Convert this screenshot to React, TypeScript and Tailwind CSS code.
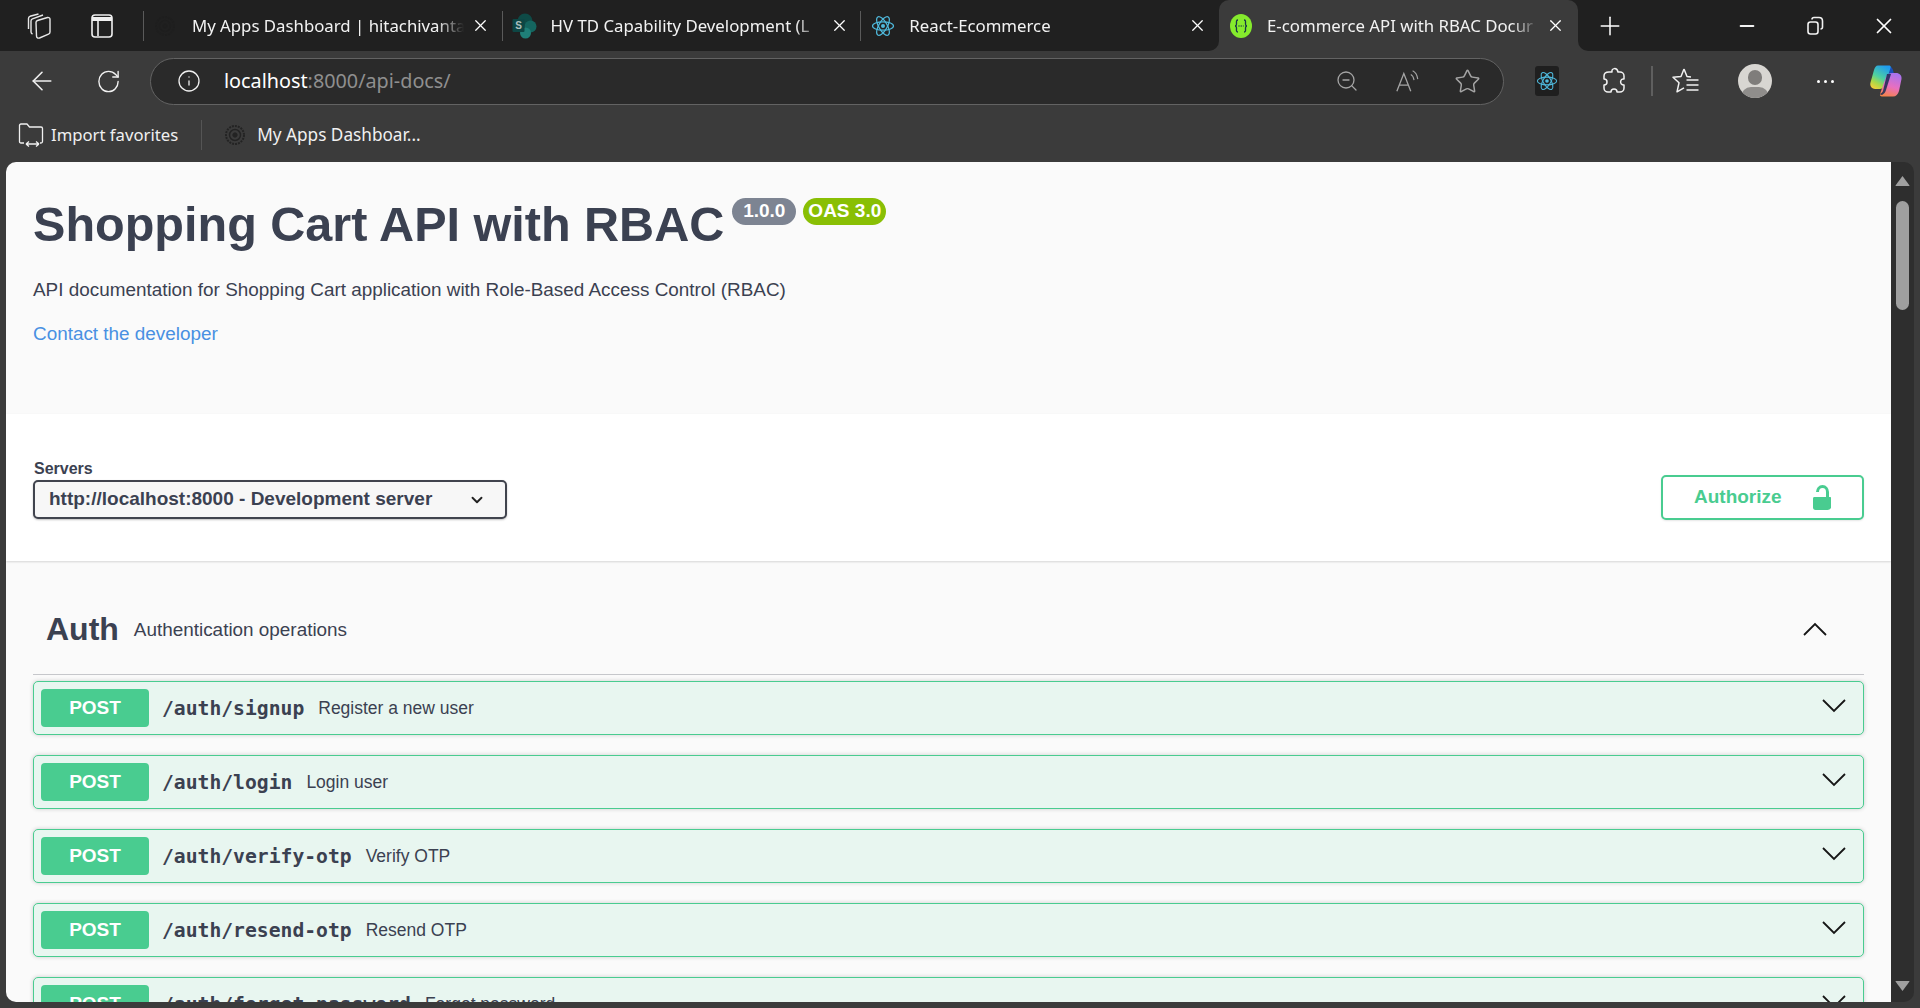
import { ArrowLeft, ChevronDown, Info, Minus, Plus, RotateCw, Star, X, ZoomOut } from "lucide-react";

const endpoints = [
  { path: "/auth/signup", summary: "Register a new user" },
  { path: "/auth/login", summary: "Login user" },
  { path: "/auth/verify-otp", summary: "Verify OTP" },
  { path: "/auth/resend-otp", summary: "Resend OTP" },
  { path: "/auth/forget-password", summary: "Forget password" },
];

function ReactIcon({ size = 24 }: { size?: number }) {
  return (
    <svg width={size} height={size} viewBox="0 0 24 24" fill="none" stroke="#4fb9dc" strokeWidth="1.2">
      <circle cx="12" cy="12" r="2" fill="#4fb9dc" stroke="none" />
      <ellipse cx="12" cy="12" rx="10.5" ry="4.2" />
      <ellipse cx="12" cy="12" rx="10.5" ry="4.2" transform="rotate(60 12 12)" />
      <ellipse cx="12" cy="12" rx="10.5" ry="4.2" transform="rotate(120 12 12)" />
    </svg>
  );
}

function DashIcon({ opacity = 1 }: { opacity?: number }) {
  return (
    <svg width="22" height="24" viewBox="0 0 22 24" fill="none" stroke="#1e1e1e" style={{ opacity }}>
      <circle cx="11" cy="12" r="9" strokeWidth="2" strokeDasharray="2 1" />
      <circle cx="11" cy="12" r="5.5" strokeWidth="1.5" />
      <circle cx="11" cy="12" r="2.2" fill="#1e1e1e" />
    </svg>
  );
}

function SharePointIcon() {
  return (
    <svg width="25" height="26" viewBox="0 0 25 26">
      <circle cx="13" cy="8" r="7.5" fill="#0e4a46" />
      <circle cx="18.500" cy="13.500" r="6" fill="#14655f" />
      <circle cx="13.500" cy="20" r="5.500" fill="#1f7f78" />
      <rect x="0.500" y="6" width="12" height="13" rx="1" fill="#0d4644" />
      <text x="6.500" y="16" textAnchor="middle" fontSize="10" fontWeight="700" fill="#aebfbd" fontFamily="Liberation Sans, sans-serif">S</text>
    </svg>
  );
}

function SwaggerIcon() {
  return (
    <svg width="22" height="24" viewBox="0 0 22 24">
      <ellipse cx="11" cy="12" rx="11" ry="12" fill="#85ea2d" />
      <path d="M8 6c-2 0-1.500 2-1.500 4s-1 2-1.500 2c.5 0 1.500 0 1.500 2s-.5 4 1.500 4M14 6c2 0 1.500 2 1.500 4s1 2 1.500 2c-.5 0-1.500 0-1.500 2s.5 4-1.500 4" fill="none" stroke="#173647" strokeWidth="1.3" />
      <path d="M8.500 12h5" stroke="#173647" strokeWidth="1.3" strokeDasharray="1 1.200" />
    </svg>
  );
}

function CopilotIcon() {
  return (
    <svg width="32" height="32" viewBox="0 0 32 32">
      <defs>
        <linearGradient id="cpA" x1="0.7" y1="0" x2="0.2" y2="1">
          <stop offset="0" stopColor="#1f9cf0" />
          <stop offset="0.5" stopColor="#4fd0a0" />
          <stop offset="0.75" stopColor="#a8d84a" />
          <stop offset="1" stopColor="#f5cf3a" />
        </linearGradient>
        <linearGradient id="cpB" x1="0.6" y1="0" x2="0.3" y2="1">
          <stop offset="0" stopColor="#a873ee" />
          <stop offset="0.55" stopColor="#e86fc0" />
          <stop offset="1" stopColor="#f7834a" />
        </linearGradient>
      </defs>
      <path d="M18 1c3 0 5 2 5.500 6L24 9h-6z" fill="#1b4fb8" />
      <path d="M8 .5h11c1.500 0 2 1 1.500 2.500L15 20c-1 2.500-3 4-5.500 4H5c-3.500 0-5.500-3-4.500-6.500L4 5C5 2 6 .5 8 .5z" fill="url(#cpA)" />
      <path d="M23 8h3c3.500 0 6 2.500 5.500 6L29 26c-1 3.500-3 5.500-6 5.500H12c-1.500 0-2.500-1-2-2.500l6-17c.8-2.500 3-4 7-4z" fill="url(#cpB)" />
      <path d="M17 9h4l-5 16c-.5 2-2 4-4 5l-3-1c2 0 3.500-1.500 4-3z" fill="#182a52" opacity="0.85" />
    </svg>
  );
}

function Chevron({ up }: { up?: boolean }) {
  return (
    <svg width="24" height="14" viewBox="0 0 24 14" fill="none" stroke="#161616" strokeWidth="1.8" className={up ? "rotate-180" : "mb-[4px]"}>
      <path d="M1 1l11 11L23 1" />
    </svg>
  );
}

function Tab({ title, icon, active }: { title: string; icon: React.ReactNode; active?: boolean }) {
  return (
    <div className={"flex h-full w-[359px] items-center " + (active ? "rounded-t-[10px] bg-[#3b3b3b]" : "")}>
      {!active && <div className="h-[30px] w-[1px] bg-[#5a5a5a]" />}
      <div className="flex w-[48px] shrink-0 justify-center pr-[5px]">{icon}</div>
      <span className="w-[272px] overflow-hidden whitespace-nowrap text-[16.800px] text-[#f2f2f2] [mask-image:linear-gradient(to_right,black_90%,transparent)]">
        {title}
      </span>
      <X size={19} strokeWidth={1.6} className="ml-[7px] text-white" />
    </div>
  );
}

export default function App() {
  return (
    <div className="flex h-screen w-full flex-col overflow-hidden bg-[#3b3b3b] font-['Noto_Sans',sans-serif]">
      {/* tab strip */}
      <div className="flex h-[51px] shrink-0">
        <div className="flex h-full w-[1219px] items-center rounded-br-[10px] bg-[#202020]">
          <div className="flex w-[143px] items-center gap-[38px] pl-[26px]">
            <svg width="26" height="28" viewBox="0 0 26 28" fill="none" stroke="#e8e8e8" strokeWidth="1.4" strokeLinejoin="round">
              <path d="M10 10.500c0-1 .5-1.700 1.500-2l10-3c1.200-.3 2.500.5 2.500 1.700V20c0 1-.5 1.800-1.500 2.200l-9 3.800c-1.500.5-3-.3-3-2z" />
              <path d="M6.500 22c-.8-.4-1.500-1-1.500-2V9c0-1 .5-1.800 1.500-2.200L17 3" />
              <path d="M2.500 17V6.500c0-1 .5-1.800 1.500-2.200L12.500 2" />
            </svg>
            <svg width="24" height="26" viewBox="0 0 24 26" fill="none" stroke="#f0f0f0" strokeWidth="1.6">
              <rect x="2" y="2" width="20" height="22" rx="3" />
              <path d="M2 6h20" strokeWidth="4" />
              <path d="M8 8v15" />
            </svg>
          </div>
          <Tab title="My Apps Dashboard | hitachivanta" icon={<DashIcon opacity={0.9} />} />
          <Tab title="HV TD Capability Development (L" icon={<SharePointIcon />} />
          <Tab title="React-Ecommerce" icon={<ReactIcon />} />
        </div>
        <div className="h-full w-[359px] bg-[#202020]">
          <Tab active title="E-commerce API with RBAC Docur" icon={<SwaggerIcon />} />
        </div>
        <div className="flex h-full flex-1 items-center rounded-bl-[10px] bg-[#202020] pl-[17px]">
          <Plus size={30} strokeWidth={1.2} className="text-white" />
          <Minus size={22} strokeWidth={2} className="ml-[111px] text-[#f2f2f2]" />
          <svg width="18" height="20" viewBox="0 0 18 20" fill="none" stroke="#f2f2f2" strokeWidth="1.6" className="ml-[48px]">
            <rect x="2" y="6" width="10" height="12" rx="2.500" />
            <path d="M6 3.500c0-1 1-2 2-2h5c2 0 3.500 1.500 3.500 3.500v6c0 1.200-.8 2-2 2" />
          </svg>
          <X size={26} strokeWidth={1.6} className="ml-[47px] text-white" />
        </div>
      </div>

      {/* toolbar */}
      <div className="flex h-[60px] shrink-0 items-center">
        <ArrowLeft size={30} strokeWidth={1.3} className="ml-[27px] text-[#f0f0f0]" />
        <RotateCw size={27} strokeWidth={1.3} className="ml-[38px] scale-x-[0.95] text-[#f0f0f0]" />
        <div className="ml-[28px] flex h-[47px] w-[1354px] items-center rounded-full border-[1.5px] border-[#636363] bg-[#2a2a2a]">
          <Info size={24} strokeWidth={1.3} className="ml-[26px] text-[#f0f0f0]" />
          <span className="ml-[23px] flex-1 text-[19.800px] text-[#8f8f8f]">
            <span className="text-white">localhost</span>:8000/api-docs/
          </span>
          <ZoomOut size={24} strokeWidth={1.3} className="text-[#a5a5a5]" />
          <div className="ml-[36px] flex h-[26px] w-[26px] items-start">
            <svg width="28" height="26" viewBox="0 0 28 26" fill="none" stroke="#a5a5a5" strokeWidth="1.4">
              <path d="M2 24L9.500 5 17 24M5 17.500h9" />
              <path d="M17 6c2 1 3 3 3.500 6M19 2c3 1.500 5 5 5.500 9" strokeWidth="1.2" />
            </svg>
          </div>
          <Star size={27} strokeWidth={1.3} className="ml-[33px] mr-[22px] text-[#a5a5a5]" />
        </div>
        <div className="ml-[31px] flex h-[30px] w-[24px] items-center justify-center rounded-[3px] bg-[#1f1f1f]">
          <ReactIcon size={22} />
        </div>
        <svg width="26" height="30" viewBox="0 0 26 30" fill="none" stroke="#f2f2f2" strokeWidth="1.5" strokeLinejoin="round" className="ml-[42px]">
          <path d="M8 6h3c-1-4 5-5 6 0h2c2 0 4 1.500 4 4v3c-4-1-5 6 0 6v3c0 2.500-2 4-4 4h-3c0-4-6-4-6 0H7c-2 0-4-1.500-4-4v-3c4 0 4-6 0-6v-3c0-2.500 2-4 5-4z" />
        </svg>
        <div className="ml-[24px] h-[30px] w-[1.500px] bg-[#5f5f5f]" />
        <svg width="30" height="30" viewBox="0 0 30 30" fill="none" stroke="#f2f2f2" strokeWidth="1.5" strokeLinejoin="round" className="ml-[18px]">
          <path d="M13 3l3 7.500 4 .5M13 3l-3 7.500-8 .8 6 5.500-2 9 7-4" />
          <path d="M15.500 14h12M15.500 19h12M15.500 24h12" />
        </svg>
        <div className="relative ml-[37px] h-[34px] w-[34px] overflow-hidden rounded-full bg-[#d8d6d2]">
          <div className="absolute left-[10px] top-[6px] h-[15px] w-[14px] rounded-full bg-[#7f7d7b]" />
          <div className="absolute left-[3px] top-[23px] h-[20px] w-[28px] rounded-full bg-[#8f8d8b]" />
        </div>
        <div className="ml-[45px] flex gap-[4px]">
          <div className="h-[3px] w-[3px] rounded-full bg-white" />
          <div className="h-[3px] w-[3px] rounded-full bg-white" />
          <div className="h-[3px] w-[3px] rounded-full bg-white" />
        </div>
        <div className="ml-[36px]">
          <CopilotIcon />
        </div>
      </div>

      {/* bookmarks */}
      <div className="flex h-[51px] shrink-0 items-center pb-[3px] text-[16.700px] text-[#f0f0f0]">
        <svg width="26" height="26" viewBox="0 0 26 26" fill="none" stroke="#f0f0f0" strokeWidth="1.3" strokeLinejoin="round" className="ml-[18px]">
          <path d="M6 21H3c-1 0-1.500-.5-1.500-1.500V3.500C1.500 2.500 2 2 3 2h6l2.500 3H23c1 0 1.500.5 1.500 1.500v13c0 1-.5 1.500-1.500 1.500h-1" />
          <path d="M8 22h13M8 22l3-2.500M8 22l3 2.500M21 22l-3-2.500M21 22l-3 2.500" />
        </svg>
        <span className="ml-[7px]">Import favorites</span>
        <div className="ml-[23px] h-[30px] w-[1px] bg-[#555]" />
        <div className="ml-[22px]"><DashIcon opacity={0.8} /></div>
        <span className="ml-[11px] text-[17.200px]">My Apps Dashboar...</span>
      </div>

      {/* page + scrollbar */}
      <div className="flex min-h-0 flex-1 pb-[6px] pl-[6px] pr-[6px]">
        <div className="h-full flex-1 overflow-hidden rounded-l-[10px] bg-[#fafafa] font-['Liberation_Sans',Arial,sans-serif] text-[#3b4151]">
          <div className="h-[252px] px-[27px] pt-[34px]">
            <div className="flex items-start">
              <h1 className="text-[48.550px] font-bold leading-[56px]">Shopping Cart API with RBAC</h1>
              <span className="ml-[8px] mt-[2px] flex h-[27px] w-[64px] items-center justify-center rounded-[14px] bg-[#7d8492] text-[19px] font-bold text-white">1.0.0</span>
              <span className="ml-[7px] mt-[2px] flex h-[27px] w-[83px] items-center justify-center rounded-[14px] bg-[#89bf04] text-[19px] font-bold text-white">OAS 3.0</span>
            </div>
            <p className="mt-[25px] text-[18.900px] leading-[26px]">API documentation for Shopping Cart application with Role-Based Access Control (RBAC)</p>
            <a className="mt-[18px] block text-[18.900px] leading-[26px] text-[#4990e2]">Contact the developer</a>
          </div>

          <div className="flex h-[147px] items-start justify-between bg-white pl-[27px] pr-[27px] pt-[46px] shadow-[0_1px_2px_0_rgba(0,0,0,0.15)]">
            <div>
              <div className="pl-[1px] text-[16px] font-bold leading-[18px]">Servers</div>
              <div className="mt-[2px] flex h-[39px] w-[474px] items-center justify-between rounded-[5px] border-2 border-[#41444e] bg-[#f7f7f7] pl-[14px] pr-[19px] text-[19px] font-bold shadow-[0_1px_2px_0_rgba(0,0,0,0.25)]">
                http://localhost:8000 - Development server
                <ChevronDown size={18} strokeWidth={2.5} className="text-[#222]" />
              </div>
            </div>
            <div className="mt-[15px] flex h-[45px] w-[203px] items-center rounded-[5px] border-[2.500px] border-[#49cc90] bg-white pl-[31px] text-[19px] font-bold text-[#49cc90] shadow-[0_1px_2px_0_rgba(0,0,0,0.1)]">
              Authorize
              <svg width="20" height="26" viewBox="0 0 20 26" fill="#49cc90" className="ml-[30px] -scale-x-100">
                <path d="M2 12h15.500c1 0 1.500.5 1.500 1.500v9c0 1.500-1 2.500-2.500 2.500h-12C3 25 2 24 1 23v-9.500C1 12.500 1 12 2 12z" />
                <path d="M4.500 12V7c0-3 2-5.500 5-5.500s5 2.500 5 5.500" fill="none" stroke="#49cc90" strokeWidth="3" />
              </svg>
            </div>
          </div>

          <div className="px-[27px]">
            <div className="flex h-[114px] items-center justify-between border-b border-[#c6c7cb] pl-[13px] pr-[37px] pt-[23px]">
              <div className="flex items-center">
                <span className="text-[32px] font-bold">Auth</span>
                <span className="ml-[15px] mt-[3px] text-[18.900px]">Authentication operations</span>
              </div>
              <Chevron up />
            </div>
            <div className="mt-[6px] flex flex-col gap-[20px]">
              {endpoints.map((ep) => (
                <div key={ep.path} className="flex h-[54px] shrink-0 items-center rounded-[5px] border-[1.500px] border-[#49cc90] bg-[#e8f6f0] pl-[7px] pr-[17px] shadow-[0_0_4px_0_rgba(0,0,0,0.19)]">
                  <span className="flex h-[38px] w-[108px] items-center justify-center rounded-[4px] bg-[#49cc90] text-[19px] font-bold text-white">POST</span>
                  <span className="ml-[13px] mt-[1px] font-['DejaVu_Sans_Mono',monospace] text-[19.700px] font-bold">{ep.path}</span>
                  <span className="ml-[14px] flex-1 text-[17.500px]">{ep.summary}</span>
                  <Chevron />
                </div>
              ))}
            </div>
          </div>
        </div>

        <div className="flex h-full w-[23px] flex-col items-center rounded-r-[10px] bg-[#2e2e2e]">
          <svg width="15" height="12" viewBox="0 0 15 12" fill="#a0a0a0" className="mt-[13px]">
            <path d="M7.500 1L14.500 10.500c0 .5-.5.5-1 .5H1.500c-.5 0-1 0-1-.5z" />
          </svg>
          <div className="mt-[14px] h-[109px] w-[13px] rounded-full bg-[#9f9f9f]" />
          <div className="flex-1" />
          <svg width="15" height="12" viewBox="0 0 15 12" fill="#a0a0a0" className="mb-[10px]">
            <path d="M7.500 11L14.500 1.500c0-.5-.5-.5-1-.5H1.500c-.5 0-1 0-1 .5z" />
          </svg>
        </div>
      </div>
    </div>
  );
}
